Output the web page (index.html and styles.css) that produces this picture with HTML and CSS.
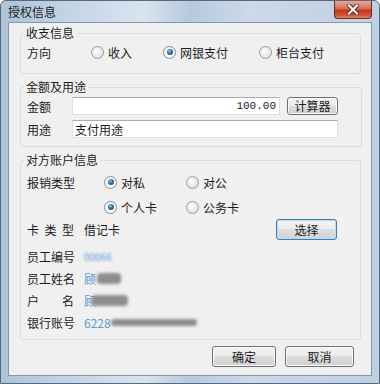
FILE: index.html
```html
<!DOCTYPE html>
<html lang="zh-CN">
<head>
    <meta charset="UTF-8">
    <meta name="viewport" content="width=device-width, initial-scale=1.0">
    <title>授权信息</title>
    <link rel="stylesheet" href="styles.css">
</head>
<body>
    <div class="window">
      <div class="titlebar">
        <span class="title">授权信息</span>
        <span class="close">
          <svg width="12" height="11" viewBox="0 0 12 11">
            <path d="M2 1.5 L10 9.5 M10 1.5 L2 9.5" stroke="#5a2418" stroke-width="4" stroke-linecap="square"/>
            <path d="M2 1.5 L10 9.5 M10 1.5 L2 9.5" stroke="#ffffff" stroke-width="2.2" stroke-linecap="square"/>
          </svg>
        </span>
      </div>

      <div class="client">
        <!-- 收支信息 -->
        <fieldset class="group g1">
          <legend>收支信息</legend>
          <div class="row r20">
            <span class="lbl w64">方向</span>
            <span class="opt w72"><span class="radio"></span>收入</span>
            <span class="opt w96"><span class="radio on"></span>网银支付</span>
            <span class="opt"><span class="radio"></span>柜台支付</span>
          </div>
        </fieldset>

        <!-- 金额及用途 -->
        <fieldset class="group g2">
          <legend>金额及用途</legend>
          <div class="row r18">
            <span class="lbl w45">金额</span>
            <span class="field money">100.00</span>
            <button class="btn calc">计算器</button>
          </div>
          <div class="row r18 mt5">
            <span class="lbl w45">用途</span>
            <span class="field wide">支付用途</span>
          </div>
        </fieldset>

        <!-- 对方账户信息 -->
        <fieldset class="group g3">
          <legend>对方账户信息</legend>
          <div class="row r20">
            <span class="lbl w77">报销类型</span>
            <span class="opt w82"><span class="radio on"></span>对私</span>
            <span class="opt"><span class="radio"></span>对公</span>
          </div>
          <div class="row r20 mt5">
            <span class="lbl w77"></span>
            <span class="opt w82"><span class="radio on"></span>个人卡</span>
            <span class="opt"><span class="radio"></span>公务卡</span>
          </div>
          <div class="row r21 mt2">
            <span class="lbl w57"><span class="spread">卡 类 型</span></span>
            <span class="val">借记卡</span>
            <button class="btn pick">选择</button>
          </div>
          <div class="row r22 mt5">
            <span class="lbl w57">员工编号</span>
            <span class="blue fuzzy">00066</span>
          </div>
          <div class="row r22">
            <span class="lbl w57">员工姓名</span>
            <span class="blue">顾</span><span class="blob b1"></span>
          </div>
          <div class="row r22">
            <span class="lbl w57"><span class="spread">户 名</span></span>
            <span class="blue">顾</span><span class="blob b2"></span>
          </div>
          <div class="row r22">
            <span class="lbl w57">银行账号</span>
            <span class="blue">6228</span><span class="blob b3"></span>
          </div>
        </fieldset>

        <div class="actions">
          <button class="btn act">确定</button>
          <button class="btn act">取消</button>
        </div>
      </div>
    </div>
</body>
</html>
```

FILE: styles.css
```css
body {
  margin: 0;
  padding: 0;
  font-family: "Noto Sans CJK SC", "Noto Sans", sans-serif;
  font-size: 12px;
  color: #1b1b1b;
  background: #ffffff;
}

.window {
  width: 380px;
  height: 384px;
  box-sizing: border-box;
  padding: 0 7px 7px 7px;
  border: 1px solid #56697e;
  border-radius: 6px 6px 0 0;
  background: linear-gradient(90deg, #aec3d9 0%, #c6d6e7 20%, #d9e4ef 38%, #b6c9dd 50%, #cbd9e9 65%, #bfd0e3 100%);
  display: flex;
  flex-direction: column;
}

.titlebar {
  height: 21px;
  display: flex;
  align-items: flex-start;
}

.title {
  margin-top: 4px;
  font-size: 12px;
  line-height: 14px;
  color: #1c1c1c;
}

.close {
  margin-left: auto;
  width: 38px;
  height: 18px;
  box-sizing: border-box;
  border: 1px solid #6b2a1e;
  border-top: none;
  border-radius: 0 0 4px 4px;
  background: linear-gradient(#e9a796 0%, #d86d57 45%, #c2371d 55%, #d2563a 85%, #e6896a 100%);
  display: flex;
  align-items: center;
  justify-content: center;
}

.client {
  flex: 1;
  background: #f0f0f0;
  border: 1px solid #8497ad;
  display: flex;
  flex-direction: column;
}

.group {
  margin: 0 10px 0 11px;
  padding: 0 23px 0 6px;
  border: 1px solid #d5dfe5;
  border-radius: 3px;
}

.group legend {
  margin-left: -3px;
  padding: 0 2px;
  line-height: 14px;
}

.g1 {
  margin-top: 3px;
  padding-top: 2px;
  padding-bottom: 11px;
}

.g2 {
  margin-top: 6px;
  padding-top: 3px;
  padding-bottom: 8px;
}

.g3 {
  margin-top: 6px;
  padding-top: 5px;
  padding-bottom: 6px;
}

.row {
  display: flex;
  align-items: center;
}

.r18 { height: 18px; }
.r20 { height: 20px; }
.r21 { height: 21px; }
.r22 { height: 22px; }
.mt2 { margin-top: 2px; }
.mt5 { margin-top: 5px; }

.lbl {
  flex: none;
}

.spread {
  display: inline-block;
  width: 47px;
  text-align: justify;
  text-align-last: justify;
}

.w45 { width: 45px; }
.w57 { width: 57px; }
.w64 { width: 64px; }
.w72 { width: 72px; }
.w77 { width: 77px; }
.w82 { width: 82px; }
.w96 { width: 96px; }

.opt {
  display: flex;
  align-items: center;
  flex: none;
}

.radio {
  width: 11px;
  height: 11px;
  margin-right: 4px;
  border: 1px solid #9a9c9e;
  border-radius: 50%;
  background: radial-gradient(circle at 40% 40%, #ffffff 0%, #e6e6e6 60%, #cbcbcb 100%);
  display: flex;
  align-items: center;
  justify-content: center;
}

.radio.on {
  border-color: #7d8c98;
  background: #f6f8f9;
}

.radio.on::after {
  content: "";
  width: 6px;
  height: 6px;
  border-radius: 50%;
  background: radial-gradient(circle at 40% 35%, #8fcbe6 0%, #2f6f9e 45%, #133a5e 100%);
}

.field {
  height: 18px;
  box-sizing: border-box;
  background: #ffffff;
  border: 1px solid #dbdfe6;
  border-top-color: #abadb3;
  display: flex;
  align-items: center;
}

.money {
  width: 208px;
  justify-content: flex-end;
  padding-right: 3px;
  font-family: "Liberation Mono", monospace;
  font-size: 11px;
}

.wide {
  width: 266px;
  padding-left: 2px;
}

.btn {
  font-family: "Noto Sans CJK SC", "Noto Sans", sans-serif;
  font-size: 12px;
  color: #1b1b1b;
  padding: 0;
  box-sizing: border-box;
  border: 1px solid #707070;
  border-radius: 3px;
  background: linear-gradient(#f2f2f2 0%, #ebebeb 49%, #dddddd 50%, #cfcfcf 100%);
  box-shadow: inset 0 0 0 1px #fbfbfb;
}

.calc {
  width: 51px;
  height: 18px;
  margin-left: 7px;
  line-height: 14px;
}

.pick {
  width: 61px;
  height: 21px;
  margin-left: auto;
  border-color: #3c7fb1;
  box-shadow: inset 0 0 0 1px #b5dcf3;
  background: linear-gradient(#f4f4f4 0%, #ececec 49%, #dedede 50%, #d2d2d2 100%);
}

.blue {
  color: #5c9ad6;
}

.fuzzy {
  font-size: 10px;
  filter: blur(1px);
}

.blob {
  display: inline-block;
  height: 11px;
  border-radius: 4px;
  background: #8d8d8d;
  filter: blur(1.4px);
}

.b1 {
  width: 24px;
  margin-left: 1px;
}

.b2 {
  width: 36px;
  margin-left: -4px;
}

.b3 {
  width: 86px;
  height: 7px;
}

.actions {
  margin-top: 6px;
  padding-right: 17px;
  display: flex;
  justify-content: flex-end;
  gap: 9px;
}

.act {
  width: 64px;
  height: 21px;
}

.act + .act {
  width: 69px;
}
```
